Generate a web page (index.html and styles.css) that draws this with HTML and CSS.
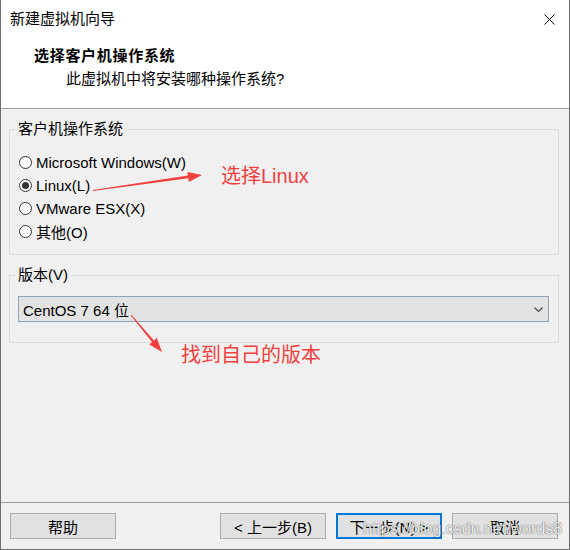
FILE: index.html
```html
<!DOCTYPE html>
<html lang="zh-CN">
<head>
<meta charset="utf-8">
<title>新建虚拟机向导</title>
<link rel="stylesheet" href="styles.css">
</head>
<body>
<div class="window">
  <header class="top">
    <div class="titlebar">
      <span class="title">新建虚拟机向导</span>
      <svg class="close" width="11" height="11" viewBox="0 0 11 11"><path d="M0.5 0.5 L10.5 10.5 M10.5 0.5 L0.5 10.5" stroke="#000" stroke-width="1" fill="none"/></svg>
    </div>
    <div class="heading">
      <div class="h1">选择客户机操作系统</div>
      <div class="h2">此虚拟机中将安装哪种操作系统?</div>
    </div>
  </header>
  <main class="content">
    <fieldset class="group">
      <legend>客户机操作系统</legend>
      <div class="os-list">
        <div class="radio"><span class="circle"></span><span>Microsoft Windows(W)</span></div>
        <div class="radio checked"><span class="circle"></span><span>Linux(L)</span></div>
        <div class="radio"><span class="circle"></span><span>VMware ESX(X)</span></div>
        <div class="radio"><span class="circle"></span><span>其他(O)</span></div>
      </div>
    </fieldset>
    <fieldset class="group ver">
      <legend>版本(V)</legend>
      <div class="ver-body">
        <div class="select">
          <span>CentOS 7 64 位</span>
          <svg class="chev" width="9" height="5" viewBox="0 0 9 5"><path d="M0.5 0.5 L4.5 4.5 L8.5 0.5" stroke="#444" stroke-width="1.1" fill="none"/></svg>
        </div>
      </div>
    </fieldset>
  </main>
  <footer class="buttons">
    <button class="btn">帮助</button>
    <span class="spacer"></span>
    <button class="btn">&lt; 上一步(B)</button>
    <button class="btn default">下一步(N) &gt;</button>
    <button class="btn">取消</button>
  </footer>
</div>
<svg class="annot" width="570" height="550" viewBox="0 0 570 550">
  <polygon points="93,191 188.3,178.2 188.8,181.9 202,175 187.4,171.9 187.9,175.6 92.9,190" fill="#f2403f"/>
  <polygon points="131.4,314.7 154,340.5 156.8,338.1 162,352 149.2,344.5 152,342.1 130.6,315.3" fill="#f2403f"/>
</svg>
<span class="note n1">选择Linux</span>
<span class="note n2">找到自己的版本</span>
<span class="watermark">https://blog.csdn.net/words8</span>
</body>
</html>
```

FILE: styles.css
```css
html, body {
  margin: 0;
  padding: 0;
}
body {
  position: relative;
  width: 570px;
  height: 550px;
  font-family: "Liberation Sans", "Noto Sans CJK SC", sans-serif;
  font-size: 15px;
  color: #000;
  background: #f0f0f0;
  overflow: hidden;
}
.window {
  width: 570px;
  height: 550px;
  box-sizing: border-box;
  border: 1px solid #6e6e6e;
  border-top: none;
  display: flex;
  flex-direction: column;
  background: #f0f0f0;
}
.top {
  flex: none;
  height: 109px;
  box-sizing: border-box;
  background: #fff;
  border-bottom: 1px solid #a0a0a0;
}
.titlebar {
  height: 38px;
  display: flex;
  align-items: center;
  justify-content: space-between;
  padding: 0 14px 0 9px;
}
.title {
  line-height: 20px;
}
.close {
  display: block;
}
.heading {
  padding: 7px 0 0 33px;
}
.h1 {
  font-weight: bold;
  line-height: 21px;
  letter-spacing: 0.7px;
}
.h2 {
  padding-left: 32px;
  margin-top: 3px;
  line-height: 20px;
}
.content {
  flex: 1;
  padding: 10px 10px 0 8px;
}
.group {
  margin: 0;
  padding: 0;
  border: 1px solid #dcdcdc;
  min-width: 0;
}
.group legend {
  margin-left: 6px;
  padding: 0 2px;
  line-height: 20px;
}
.group.ver {
  margin-top: 10px;
}
.os-list {
  display: flex;
  flex-direction: column;
  padding: 12px 0 11px 9px;
}
.radio {
  height: 23px;
  display: flex;
  align-items: center;
  gap: 4px;
}
.circle {
  width: 13px;
  height: 13px;
  box-sizing: border-box;
  border: 1px solid #333;
  border-radius: 50%;
  background: #fff;
  display: flex;
  align-items: center;
  justify-content: center;
}
.radio.checked .circle::after {
  content: "";
  width: 7px;
  height: 7px;
  border-radius: 50%;
  background: #333;
}
.ver-body {
  padding: 11px 9px 20px 8px;
}
.select {
  height: 26px;
  box-sizing: border-box;
  border: 1px solid #8ea3b8;
  background: #e3e3e3;
  display: flex;
  align-items: center;
  justify-content: space-between;
  padding: 0 5px 0 4px;
}
.chev {
  display: block;
}
.buttons {
  flex: none;
  height: 47px;
  box-sizing: border-box;
  border-top: 1px solid #a0a0a0;
  display: flex;
  align-items: flex-start;
  gap: 10px;
  padding: 10px 11px 0 9px;
}
.spacer {
  flex: 1;
}
.btn {
  width: 106px;
  height: 26px;
  box-sizing: border-box;
  border: 1px solid #adadad;
  background: #e1e1e1;
  font: inherit;
  color: #000;
  padding: 0;
  display: flex;
  align-items: center;
  justify-content: center;
}
.btn.default {
  border: 2px solid #0078d7;
}
.annot {
  position: absolute;
  left: 0;
  top: 0;
  pointer-events: none;
}
.note {
  position: absolute;
  font-family: "Liberation Sans", "Noto Sans CJK SC", sans-serif;
  font-size: 20px;
  line-height: 24px;
  color: #f2403f;
  white-space: nowrap;
}
.n1 {
  left: 221px;
  top: 164px;
}
.n2 {
  left: 181px;
  top: 343px;
}
.watermark {
  position: absolute;
  left: 363px;
  top: 519px;
  font-family: "Liberation Sans", sans-serif;
  font-size: 16px;
  line-height: 20px;
  color: rgba(255, 255, 255, 0.9);
  text-shadow: 0 0 1px rgba(0, 0, 0, 0.6), 0 0 2px rgba(0, 0, 0, 0.25);
  white-space: nowrap;
}
```
